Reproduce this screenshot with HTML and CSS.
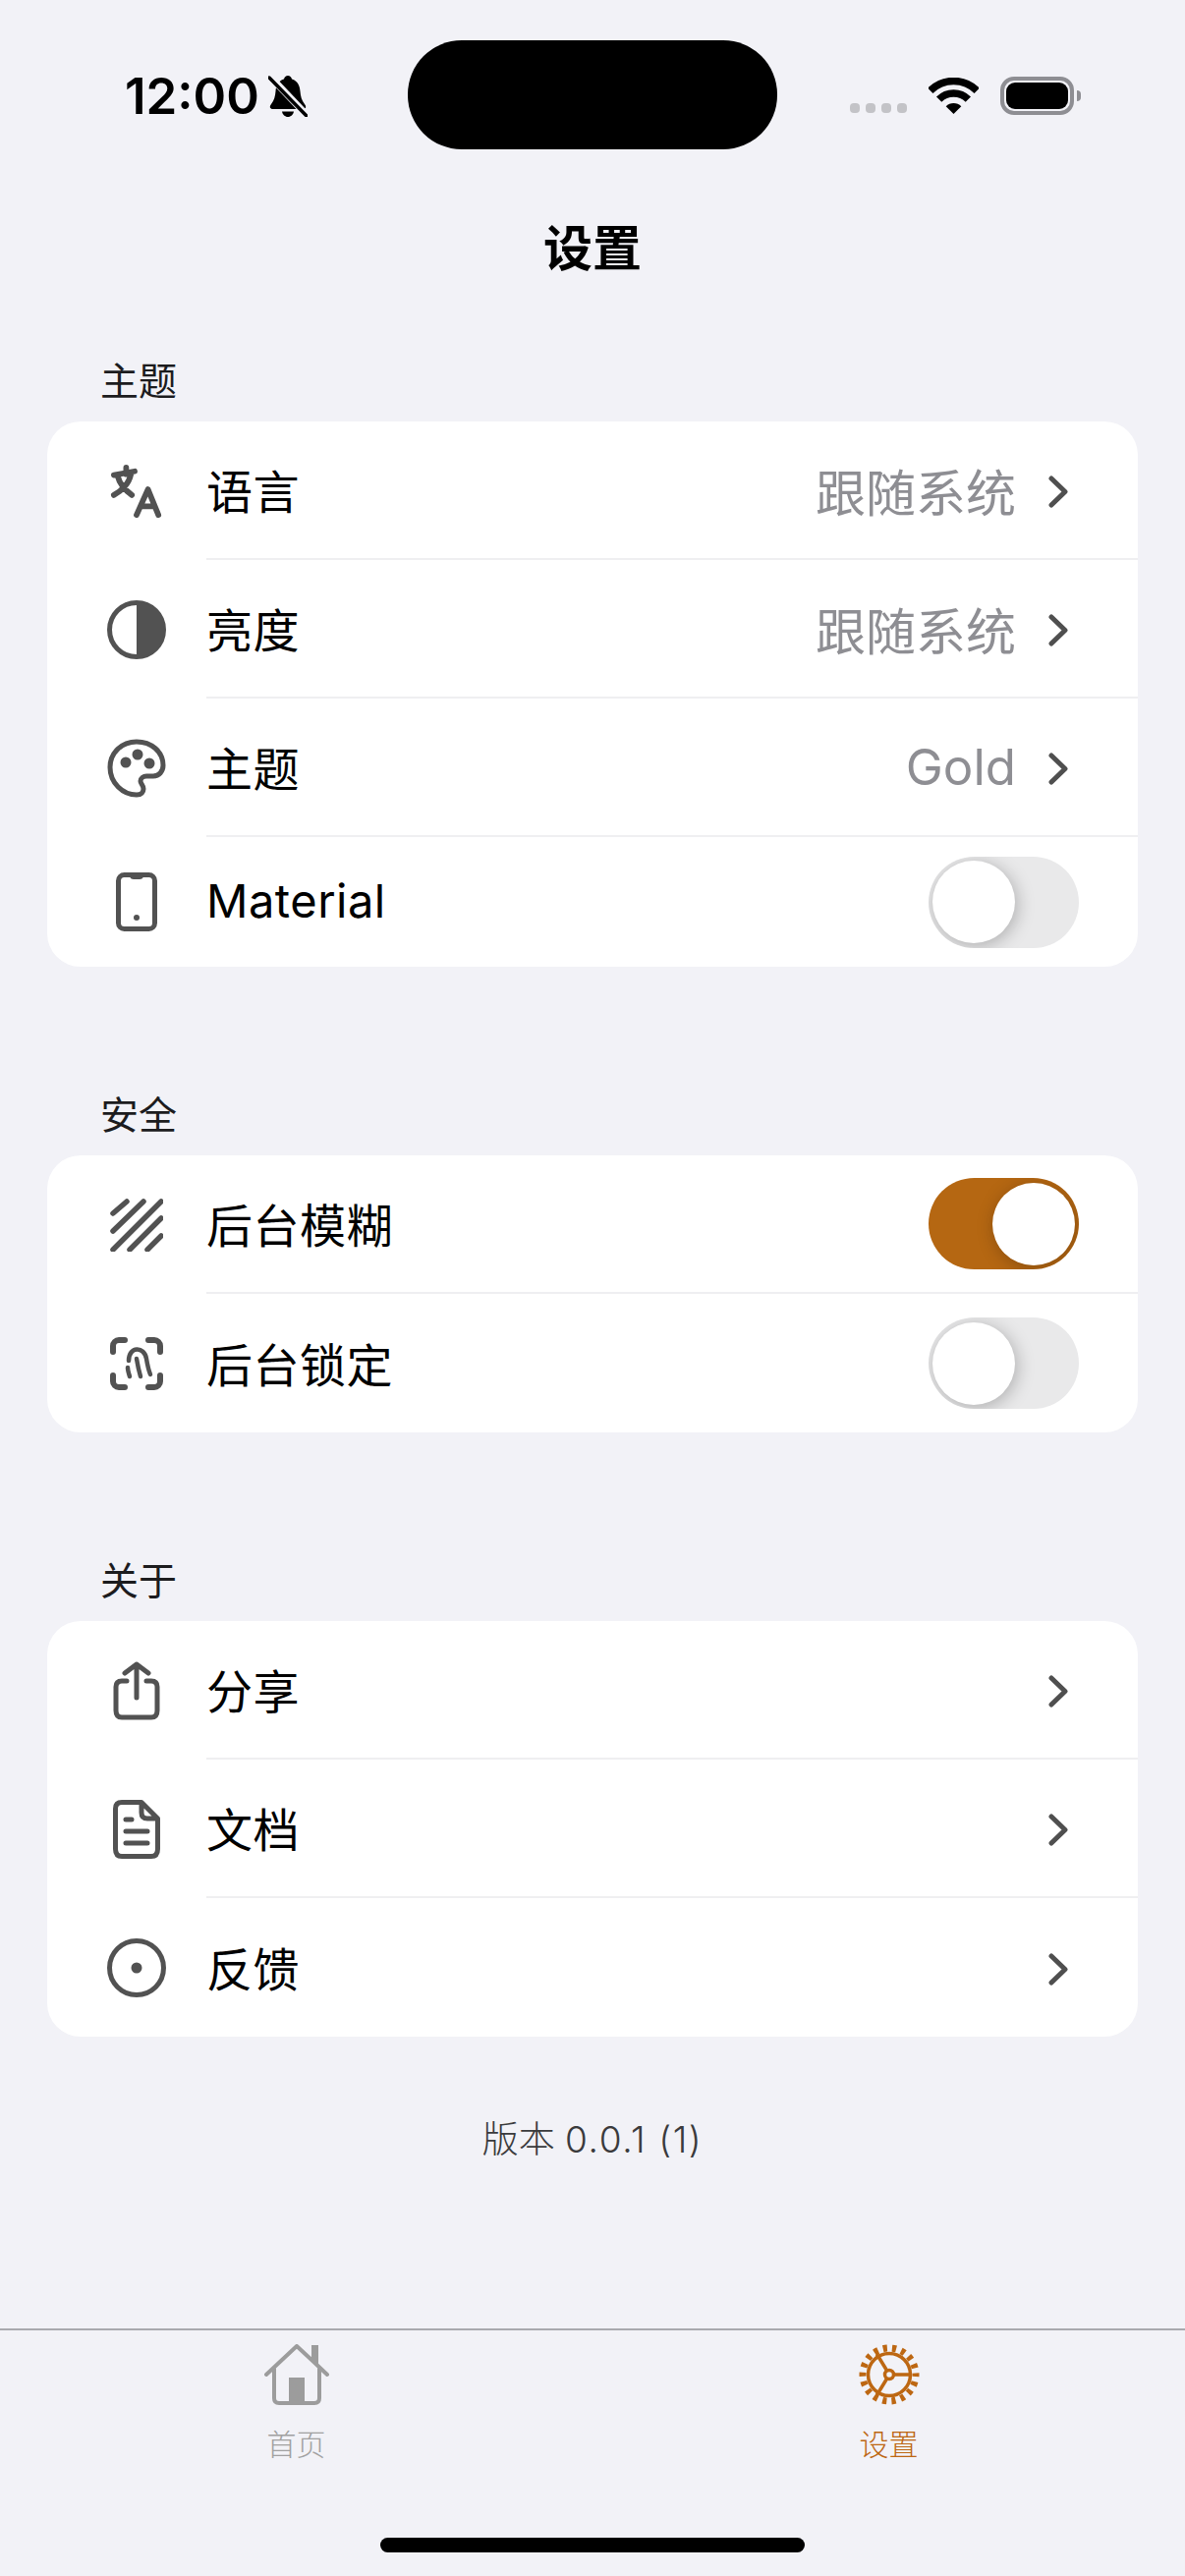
FILE: index.html
```html
<!DOCTYPE html>
<html>

<head>
    <meta charset="utf-8">
    <title>设置</title>
    <meta name="viewport" content="width=device-width">
    <link rel="stylesheet" href="styles.css">
</head>

<body>
    <div class="screen">
        <div class="status-bar">
            <div class="status-left">
                <span class="time">12:00</span>
                <svg class="bell" viewBox="0 0 40 42">
                    <path d="M20 0c-2 0-3.500 1.500-4 3.500C10 5.500 8 10 7.500 16c-.4 5-1.500 9-4.500 13-2 2.500-1.500 5 2 5h30c3.500 0 4-2.500 2-5-3-4-4.100-8-4.500-13C32 10 30 5.500 24 3.500 23.500 1.500 22 0 20 0z" />
                    <path d="M14 36.500h12c-.5 3-3 5.500-6 5.500s-5.500-2.500-6-5.500z" />
                    <path class="bell-gap" d="M2 1 39 40" />
                    <path class="bell-slash" d="M1 2 39 41" />
                </svg>
            </div>
            <div class="island"></div>
            <div class="status-right">
                <div class="signal"><i></i><i></i><i></i><i></i></div>
                <svg class="wifi" viewBox="0 0 51 37">
                    <path class="wifi-band" d="M1.800 13.300A33.500 33.500 0 0 1 49.200 13.300" />
                    <path class="wifi-band" d="M10.650 22.150A21 21 0 0 1 40.350 22.150" />
                    <path d="M25.500 37 17.700 29.200A11 11 0 0 1 33.300 29.200z" />
                </svg>
                <div class="battery"><div class="battery-level"></div></div>
                <div class="battery-nub"></div>
            </div>
        </div>

        <h1 class="page-title">设置</h1>

        <div class="section-title">主题</div>
        <div class="card">
            <div class="row">
                <span class="row-icon">
                    <svg class="icon icon-54 icon-bold" viewBox="0 0 54 56">
                        <path d="M16 3v7M3 11l22-4M7 12c2 8 8 15 15 20M21 10c-2 10-10 18-18 22M27 53l12-27 11 27M32 44h14" />
                    </svg>
                </span>
                <div class="row-body">
                    <span class="row-label">语言</span>
                    <span class="row-value">跟随系统</span>
                    <svg class="chevron" viewBox="0 0 20 33"><path d="M3 3l14 13.500L3 30" /></svg>
                </div>
            </div>
            <div class="row">
                <span class="row-icon">
                    <svg class="icon icon-60" viewBox="0 0 60 60">
                        <circle cx="30" cy="30" r="27.500" />
                        <path class="solid" d="M30 2.500a27.500 27.500 0 0 1 0 55z" />
                    </svg>
                </span>
                <div class="row-body">
                    <span class="row-label">亮度</span>
                    <span class="row-value">跟随系统</span>
                    <svg class="chevron" viewBox="0 0 20 33"><path d="M3 3l14 13.500L3 30" /></svg>
                </div>
            </div>
            <div class="row">
                <span class="row-icon">
                    <svg class="icon icon-60" viewBox="0 0 60 60">
                        <path d="M30 3C15 3 3 14 3 29c0 16 13 28 27 28 5 0 7-3 7-6 0-4-3-5-3-8 0-3 3-5 6-5h7c6 0 10-5 10-11C57 13 45 3 30 3z" />
                        <circle class="solid" cx="19" cy="24" r="5.500" />
                        <circle class="solid" cx="31" cy="16" r="5.500" />
                        <circle class="solid" cx="43" cy="25" r="5.500" />
                    </svg>
                </span>
                <div class="row-body">
                    <span class="row-label">主题</span>
                    <span class="row-value">Gold</span>
                    <svg class="chevron" viewBox="0 0 20 33"><path d="M3 3l14 13.500L3 30" /></svg>
                </div>
            </div>
            <div class="row row-material">
                <span class="row-icon">
                    <svg class="icon icon-phone" viewBox="0 0 42 60">
                        <rect x="2.500" y="2.500" width="37" height="55" rx="6" />
                        <path class="solid" d="M14 3h14c0 3-2 4-4 4h-6c-2 0-4-1-4-4z" />
                        <circle class="solid" cx="21" cy="46" r="3" />
                    </svg>
                </span>
                <div class="row-body">
                    <span class="row-label">Material</span>
                    <div class="toggle"><div class="thumb"></div></div>
                </div>
            </div>
        </div>

        <div class="section-title section-gap">安全</div>
        <div class="card">
            <div class="row">
                <span class="row-icon">
                    <svg class="icon icon-54 icon-blur" viewBox="0 0 54 54">
                        <path d="M3 15 17 3M3 33 34 3M3 52 52 3M20 52 52 20M38 52 52 38" />
                    </svg>
                </span>
                <div class="row-body">
                    <span class="row-label">后台模糊</span>
                    <div class="toggle toggle-on"><div class="thumb"></div></div>
                </div>
            </div>
            <div class="row row-last">
                <span class="row-icon">
                    <svg class="icon icon-54 icon-bold" viewBox="0 0 54 54">
                        <path d="M3 15V9a6 6 0 0 1 6-6h6M39 3h6a6 6 0 0 1 6 6v6M51 39v6a6 6 0 0 1-6 6h-6M15 51H9a6 6 0 0 1-6-6v-6" />
                        <path class="thin" d="M19 24c0-15 16-15 18-2 1 6 2 11 4 16M27 22c1 6 2 11 4 18M18 31c0 3 1 6 2 9" />
                    </svg>
                </span>
                <div class="row-body">
                    <span class="row-label">后台锁定</span>
                    <div class="toggle"><div class="thumb"></div></div>
                </div>
            </div>
        </div>

        <div class="section-title section-gap">关于</div>
        <div class="card">
            <div class="row">
                <span class="row-icon">
                    <svg class="icon icon-share" viewBox="0 0 48 60">
                        <path d="M14 20H9q-6 0-6 6v24q0 7 6 7h30q6 0 6-7V26q0-6-6-6h-5M24 37V3M12 12l12-9 12 9" />
                    </svg>
                </span>
                <div class="row-body">
                    <span class="row-label">分享</span>
                    <svg class="chevron" viewBox="0 0 20 33"><path d="M3 3l14 13.500L3 30" /></svg>
                </div>
            </div>
            <div class="row">
                <span class="row-icon">
                    <svg class="icon icon-share" viewBox="0 0 48 60">
                        <path d="M9 2.500h20L45.500 19v31q0 7.500-6.500 7.500H9q-6.500 0-6.500-7.500V9Q2.500 2.500 9 2.500zM29 3v10q0 6 6 6h10M13 20h6M13 32h22M13 44h22" />
                    </svg>
                </span>
                <div class="row-body">
                    <span class="row-label">文档</span>
                    <svg class="chevron" viewBox="0 0 20 33"><path d="M3 3l14 13.500L3 30" /></svg>
                </div>
            </div>
            <div class="row row-last">
                <span class="row-icon">
                    <svg class="icon icon-60" viewBox="0 0 60 60">
                        <circle cx="30" cy="30" r="27.500" />
                        <circle class="solid" cx="30" cy="30" r="5.500" />
                    </svg>
                </span>
                <div class="row-body">
                    <span class="row-label">反馈</span>
                    <svg class="chevron" viewBox="0 0 20 33"><path d="M3 3l14 13.500L3 30" /></svg>
                </div>
            </div>
        </div>

        <div class="version">版本 <span class="version-number">0.0.1 (1)</span></div>

        <div class="tab-bar">
            <div class="tabs">
                <div class="tab">
                    <svg class="tab-icon home-icon" viewBox="0 0 66 62">
                        <path d="M2 31 33 2l14 13M64 31 47 15M10 25v30q0 5 5 5h36q5 0 5-5V25" />
                        <path class="solid" d="M48 1h7v20l-7-7zM25 34h16v24H25z" />
                    </svg>
                    <span class="tab-label">首页</span>
                </div>
                <div class="tab tab-active">
                    <svg class="tab-icon gear-icon" viewBox="0 0 62 62">
                        <circle class="gear-teeth" cx="31" cy="31" r="27" />
                        <circle cx="31" cy="31" r="21.500" />
                        <circle cx="31" cy="31" r="4.500" />
                        <path d="M35.500 31H52M28.700 27 18.300 10M28.700 35 18.300 52" />
                    </svg>
                    <span class="tab-label">设置</span>
                </div>
            </div>
            <div class="home-indicator"></div>
        </div>
    </div>
</body>

</html>
```

FILE: styles.css
```css
* {
    box-sizing: border-box;
}

body {
    margin: 0;
    background-color: #f2f2f7;
    color: #000;
    font-family: Inter, "Noto Sans CJK SC", sans-serif;
}

.screen {
    height: 2622px;
    display: flex;
    flex-direction: column;
    overflow: hidden;
}

/* status bar */
.status-bar {
    display: grid;
    grid-template-columns: 415px 376px 1fr;
    height: 152px;
    padding-top: 41px;
}

.status-left {
    display: flex;
    align-items: center;
    gap: 9px;
    height: 39px;
    margin-top: 37px;
    padding-left: 127px;
}

.time {
    font-size: 51px;
    font-weight: 600;
    line-height: 39px;
}

.bell {
    width: 40px;
    height: 42px;
    flex: none;
}

.bell-gap {
    stroke: #f2f2f7;
    stroke-width: 7;
    fill: none;
}

.bell-slash {
    stroke: #000;
    stroke-width: 3.500;
    stroke-linecap: round;
    fill: none;
}

.island {
    height: 111px;
    background-color: #000;
    border-radius: 55px;
}

.status-right {
    display: flex;
    align-items: center;
    height: 39px;
    margin-top: 37px;
    padding-left: 74px;
}

.signal {
    display: flex;
    gap: 6px;
    margin-top: 24px;
    margin-right: 22px;
}

.signal i {
    width: 10px;
    height: 10px;
    border-radius: 4px;
    background-color: #c3c3c7;
}

.wifi {
    width: 51px;
    height: 37px;
    margin-right: 22px;
}

.wifi-band {
    fill: none;
    stroke: #000;
    stroke-width: 7.500;
}

.battery {
    width: 75px;
    height: 39px;
    padding: 2px;
    border: 4px solid #8e8e93;
    border-radius: 14px;
}

.battery-level {
    height: 100%;
    background-color: #000;
    border-radius: 9px;
}

.battery-nub {
    width: 4px;
    height: 11px;
    margin-left: 3px;
    background-color: #8e8e93;
    border-radius: 0 4px 4px 0;
}

/* header and list */
.page-title {
    margin: 71px 0 0;
    font-size: 50px;
    font-weight: 700;
    line-height: 60px;
    text-align: center;
}

.section-title {
    height: 50px;
    margin: 80px 0 16px;
    padding-left: 102px;
    color: #1c1c1e;
    font-size: 39px;
    line-height: 50px;
}

.section-gap {
    margin-top: 126px;
}

.card {
    margin: 0 48px;
    background-color: #fff;
    border-radius: 34px;
}

.row {
    display: flex;
    align-items: center;
    height: 141px;
    padding-left: 60px;
}

.row-material {
    height: 132px;
}

.row-icon {
    display: flex;
    justify-content: center;
    flex: none;
    width: 61px;
    margin-right: 41px;
}

.row-body {
    display: flex;
    align-items: center;
    flex: 1;
    height: 100%;
    padding-right: 60px;
    border-bottom: 2px solid #efeff1;
}

.row-last .row-body,
.row-material .row-body {
    border-bottom: none;
}

.row-label {
    flex: 1;
    margin-bottom: 3px;
    font-size: 47px;
    letter-spacing: 0.5px;
}

.row-value {
    margin-right: 33px;
    color: #8e8e93;
    font-size: 51px;
}

.chevron {
    width: 20px;
    height: 33px;
    margin-top: 4px;
    margin-right: 11px;
    fill: none;
    stroke: #4f4f4f;
    stroke-width: 5;
    stroke-linecap: round;
    stroke-linejoin: round;
}

.icon {
    fill: none;
    stroke: #525252;
    stroke-width: 5;
    stroke-linecap: round;
    stroke-linejoin: round;
}

.icon-bold {
    stroke-width: 6;
}

.icon-blur {
    stroke-width: 5.500;
}

.icon .solid {
    fill: #525252;
    stroke: none;
}

.icon .thin {
    stroke-width: 4.500;
}

.icon-54 {
    width: 54px;
    height: 54px;
}

.icon-60 {
    width: 60px;
    height: 60px;
}

.icon-phone {
    width: 42px;
    height: 60px;
}

.icon-share {
    width: 48px;
    height: 60px;
}

/* switches */
.toggle {
    display: flex;
    align-items: center;
    width: 153px;
    height: 93px;
    padding: 0 4px;
    background-color: #e9e9ea;
    border-radius: 47px;
    overflow: hidden;
}

.toggle-on {
    justify-content: flex-end;
    background-color: #b56712;
}

.thumb {
    width: 84px;
    height: 84px;
    background-color: #fff;
    border-radius: 50%;
    box-shadow: 2px 3px 18px rgba(0, 0, 0, 0.26);
}

.version {
    height: 50px;
    margin-top: 80px;
    color: #3a3a3c;
    font-size: 37px;
    font-weight: 300;
    line-height: 50px;
    text-align: center;
}

.version-number {
    letter-spacing: 1.600px;
}

/* tab bar */
.tab-bar {
    display: flex;
    flex-direction: column;
    height: 252px;
    margin-top: auto;
    border-top: 2px solid #a9a9ae;
}

.tabs {
    display: grid;
    grid-template-columns: 1fr 1fr;
    height: 211px;
}

.tab {
    display: flex;
    flex-direction: column;
    align-items: center;
    padding-top: 14px;
    color: #a1a1a1;
}

.tab-active {
    color: #bd6712;
}

.tab-icon {
    width: 66px;
    height: 62px;
    fill: none;
    stroke: currentColor;
}

.tab-icon .solid {
    fill: currentColor;
    stroke: none;
}

.home-icon {
    stroke-width: 4;
    stroke-linecap: round;
    stroke-linejoin: round;
    color: #9c9c9c;
}

.gear-icon {
    width: 62px;
    stroke-width: 3.500;
}

.gear-teeth {
    stroke-width: 7;
    stroke-dasharray: 4.200 5.220;
    stroke-dashoffset: 2.100;
}

.tab-label {
    margin-top: 22px;
    font-size: 30px;
    font-weight: 300;
    line-height: 37px;
}

.home-indicator {
    width: 432px;
    height: 15px;
    margin: 0 auto;
    background-color: #000;
    border-radius: 8px;
}
```
